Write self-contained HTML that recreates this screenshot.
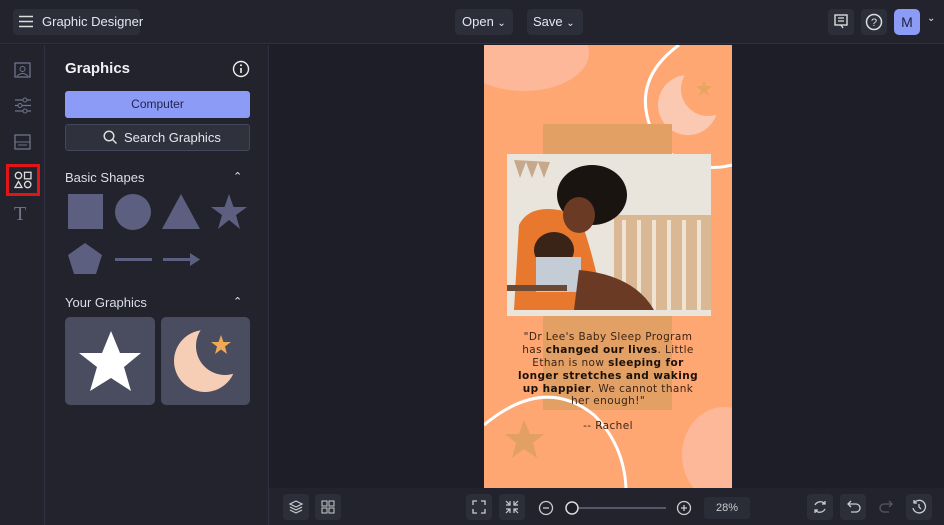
<!DOCTYPE html>
<html><head><style>
*{box-sizing:border-box;margin:0;padding:0}
body{width:944px;height:525px;overflow:hidden;background:#1d1e27;font-family:"Liberation Sans",sans-serif;color:#e6e7ee;position:relative}
.abs{position:absolute}
.btn{position:absolute;background:#2c2e3a;border-radius:4px}
.top{left:0;top:0;width:944px;height:44px;background:#22232d;border-bottom:1px solid #2f3140}
.rail{left:0;top:45px;width:45px;height:480px;background:#22232d;border-right:1px solid #2f3140}
.panel{left:45px;top:45px;width:224px;height:480px;background:#22232d;border-right:1px solid #2f3140}
.bot{left:269px;top:488px;width:675px;height:37px;background:#22232d}
.t{position:absolute;font-size:13px;white-space:nowrap}
</style></head><body>
<div class="abs top"></div>
<div class="btn" style="left:13px;top:9px;width:127px;height:26px"></div>
<svg class="abs" style="left:19px;top:15px" width="14" height="13"><path d="M0 1.5H14M0 6.5H14M0 11.5H14" stroke="#ddd" stroke-width="1.6"/></svg>
<div class="t" style="left:42px;top:14px;color:#e5e6ee">Graphic Designer</div>
<div class="btn" style="left:455px;top:9px;width:58px;height:26px"></div>
<div class="t" style="left:462px;top:14px">Open <span style="font-size:10px">⌄</span></div>
<div class="btn" style="left:527px;top:9px;width:56px;height:26px"></div>
<div class="t" style="left:533px;top:14px">Save <span style="font-size:10px">⌄</span></div>
<div class="btn" style="left:828px;top:9px;width:26px;height:26px"></div>
<svg class="abs" style="left:834px;top:14px" width="14" height="16"><rect x="1" y="1" width="12" height="10" fill="none" stroke="#ddd" stroke-width="1.4"/><path d="M4 4H10M4 7H10M7 11L9 14" stroke="#ddd" stroke-width="1.3"/></svg>
<div class="btn" style="left:861px;top:9px;width:26px;height:26px"></div>
<svg class="abs" style="left:865px;top:13px" width="18" height="18"><circle cx="9" cy="9" r="7.5" fill="none" stroke="#ddd" stroke-width="1.5"/><text x="9" y="13" font-size="11" fill="#ddd" text-anchor="middle" font-family="Liberation Sans">?</text></svg>
<div class="abs" style="left:894px;top:9px;width:26px;height:26px;background:#8c9bf5;border-radius:5px;color:#1e2040;font-size:14px;text-align:center;line-height:26px">M</div>
<div class="t" style="left:927px;top:13px;font-size:10px">⌄</div>

<div class="abs rail"></div>
<svg class="abs" style="left:14px;top:62px" width="18" height="16"><rect x="1" y="1" width="15" height="14" fill="none" stroke="#70738a" stroke-width="1.3"/><circle cx="8.5" cy="7" r="2.5" fill="none" stroke="#70738a"/><path d="M3 14Q8.5 9 14 14" fill="none" stroke="#70738a"/></svg>
<svg class="abs" style="left:14px;top:97px" width="18" height="17"><path d="M1 3H17M1 8.5H17M1 14H17" stroke="#70738a" stroke-width="1.2"/><circle cx="11" cy="3" r="2" fill="#22232d" stroke="#70738a"/><circle cx="6" cy="8.5" r="2" fill="#22232d" stroke="#70738a"/><circle cx="11" cy="14" r="2" fill="#22232d" stroke="#70738a"/></svg>
<svg class="abs" style="left:14px;top:134px" width="18" height="16"><rect x="1" y="1" width="15" height="14" fill="none" stroke="#70738a" stroke-width="1.3"/><path d="M1 8H16M4 11H13" stroke="#70738a"/></svg>
<div class="abs" style="left:6px;top:164px;width:34px;height:32px;border:3px solid #e01515"></div>
<svg class="abs" style="left:14px;top:171px" width="18" height="18"><circle cx="4.5" cy="4.5" r="3.2" fill="none" stroke="#ddd" stroke-width="1.3"/><rect x="10.5" y="1.3" width="6.5" height="6.5" fill="none" stroke="#ddd" stroke-width="1.3"/><path d="M4.5 10.5L8 16.5H1Z" fill="none" stroke="#ddd" stroke-width="1.3"/><circle cx="13.7" cy="13.5" r="3.2" fill="none" stroke="#ddd" stroke-width="1.3"/></svg>
<div class="t" style="left:14px;top:203px;font-size:20px;color:#70738a;font-family:'Liberation Serif',serif">T</div>

<div class="abs panel"></div>
<div class="t" style="left:65px;top:60px;font-size:15px;font-weight:bold;color:#f0f0f5">Graphics</div>
<svg class="abs" style="left:232px;top:60px" width="18" height="18"><circle cx="9" cy="9" r="7.5" fill="none" stroke="#eee" stroke-width="1.4"/><path d="M9 8V13" stroke="#eee" stroke-width="1.6"/><circle cx="9" cy="5.3" r="1" fill="#eee"/></svg>
<div class="abs" style="left:65px;top:91px;width:185px;height:27px;background:#8c9bf5;border-radius:3px;color:#232650;font-size:12px;text-align:center;line-height:27px">Computer</div>
<div class="abs" style="left:65px;top:124px;width:185px;height:27px;background:#2f313d;border:1px solid #44465a;border-radius:3px;font-size:13px;line-height:25px;padding-left:58px">Search Graphics</div>
<svg class="abs" style="left:103px;top:130px" width="15" height="15"><circle cx="6" cy="6" r="4.8" fill="none" stroke="#ddd" stroke-width="1.5"/><path d="M9.5 9.5L13.5 13.5" stroke="#ddd" stroke-width="1.5"/></svg>
<div class="t" style="left:65px;top:170px;color:#dcdde5">Basic Shapes</div>
<div class="t" style="left:233px;top:170px;font-size:11px">⌃</div>
<svg class="abs" style="left:65px;top:192px" width="185" height="85">
<rect x="3" y="2" width="35" height="35" fill="#5d5f80"/>
<circle cx="68" cy="20" r="18" fill="#5d5f80"/>
<path d="M116 2L135 37H97Z" fill="#5d5f80"/>
<path d="M164 2L168.5 15H182L171 23L175 37L164 28L153 37L157 23L146 15H159.5Z" fill="#5d5f80"/>
<path d="M20 51L37 63L31 82H9L3 63Z" fill="#5d5f80"/>
<rect x="50" y="66" width="37" height="3" fill="#5d5f80"/>
<path d="M98 66H125V61L135 67.5L125 74V69H98Z" fill="#5d5f80"/>
</svg>
<div class="t" style="left:65px;top:295px;color:#dcdde5">Your Graphics</div>
<div class="t" style="left:233px;top:295px;font-size:11px">⌃</div>
<div class="abs" style="left:65px;top:317px;width:90px;height:88px;background:#4a4c5f;border-radius:5px"></div>
<svg class="abs" style="left:78px;top:330px" width="64" height="63"><path d="M33 1L42 23L63 23L46 37L53 61L33 48L12 61L19 37L1 23L24 23Z" fill="#fff"/></svg>
<div class="abs" style="left:161px;top:317px;width:89px;height:88px;background:#4a4c5f;border-radius:5px"></div>
<svg class="abs" style="left:161px;top:317px" width="89" height="88">
<defs><mask id="m1"><rect width="89" height="88" fill="#fff"/><circle cx="64" cy="29" r="29" fill="#000"/></mask></defs>
<circle cx="44" cy="44" r="31" fill="#f6cdb5" mask="url(#m1)"/>
<path d="M60 18L62.5 25H70L64 29.5L66 37L60 32.5L54 37L56 29.5L50 25H57.5Z" fill="#f0aa55"/></svg>

<!-- artboard -->
<svg class="abs" style="left:484px;top:45px" width="248" height="443">
<defs><clipPath id="c"><rect width="248" height="443"/></clipPath>
<mask id="m2"><rect width="248" height="443" fill="#fff"/><circle cx="224" cy="44" r="27" fill="#000"/></mask></defs>
<g clip-path="url(#c)">
<rect width="248" height="443" fill="#fea772"/>
<ellipse cx="40" cy="8" rx="65" ry="38" fill="#fdb89a"/>
<path d="M195 0Q140 40 175 100Q210 130 248 120" fill="none" stroke="#fff" stroke-width="3"/>
<circle cx="204" cy="60" r="30" fill="#fbc8b2" mask="url(#m2)"/>
<path d="M220 35l2 6h6l-5 4 2 6-5-4-5 4 2-6-5-4h6z" fill="#e8a560"/>
<rect x="59" y="79" width="129" height="286" fill="#e2a064"/>
<ellipse cx="240" cy="410" rx="42" ry="48" fill="#fdb89a"/>
<path d="M0 380Q60 330 110 370Q140 400 142 443" fill="none" stroke="#fff" stroke-width="3"/>
<path d="M40 375l6 14h14l-11 9 4 15-13-9-12 9 4-15-11-9h14z" fill="#e2a064"/>
<rect x="23" y="109" width="204" height="162" fill="#e9e4dc"/>
<path d="M30 115l6 18 6-16 6 16 6-16 6 16 6-16" fill="#c8a88a"/>
<rect x="130" y="170" width="97" height="95" fill="#d9b893"/>
<path d="M140 175V265M155 175V265M170 175V265M185 175V265M200 175V265M215 175V265" stroke="#efe3d3" stroke-width="4"/>
<ellipse cx="108" cy="150" rx="35" ry="30" fill="#1a1410"/>
<path d="M35 180Q45 160 75 165L95 170Q110 210 120 265H30Z" fill="#e7782e"/>
<ellipse cx="95" cy="170" rx="16" ry="18" fill="#6a3a24"/>
<ellipse cx="70" cy="205" rx="20" ry="18" fill="#3a2418"/>
<rect x="52" y="212" width="45" height="35" fill="#c4ccd6"/>
<path d="M95 225Q150 230 170 265H90Z" fill="#6a3a24"/>
<rect x="23" y="240" width="60" height="6" fill="#6b4a35"/>
</g>
<g font-family="'DejaVu Sans',sans-serif" font-size="10.5" fill="#3a2418" text-anchor="middle" letter-spacing="0.4">
<text x="124" y="295">"Dr Lee's Baby Sleep Program</text>
<text x="124" y="308">has <tspan font-weight="bold" fill="#1a100a">changed our lives</tspan>. Little</text>
<text x="124" y="321">Ethan is now <tspan font-weight="bold" fill="#1a100a">sleeping for</tspan></text>
<text x="124" y="334" font-weight="bold" fill="#1a100a">longer stretches and waking</text>
<text x="124" y="347"><tspan font-weight="bold" fill="#1a100a">up happier</tspan>. We cannot thank</text>
<text x="124" y="359">her enough!"</text>
<text x="124" y="384">-- Rachel</text>
</g>
</svg>

<div class="abs bot"></div>
<div class="btn" style="left:283px;top:494px;width:26px;height:26px"></div>
<svg class="abs" style="left:288px;top:499px" width="16" height="16"><path d="M8 2L14 5L8 8L2 5Z M2 8L8 11L14 8 M2 11L8 14L14 11" fill="none" stroke="#ccc" stroke-width="1.2"/></svg>
<div class="btn" style="left:315px;top:494px;width:26px;height:26px"></div>
<svg class="abs" style="left:321px;top:500px" width="14" height="14"><rect x="1" y="1" width="5" height="5" fill="none" stroke="#ccc"/><rect x="8" y="1" width="5" height="5" fill="none" stroke="#ccc"/><rect x="1" y="8" width="5" height="5" fill="none" stroke="#ccc"/><rect x="8" y="8" width="5" height="5" fill="none" stroke="#ccc"/></svg>
<div class="btn" style="left:466px;top:494px;width:26px;height:26px"></div>
<svg class="abs" style="left:472px;top:500px" width="14" height="14"><path d="M1 5V1H5M9 1H13V5M13 9V13H9M5 13H1V9" fill="none" stroke="#ccc" stroke-width="1.3"/></svg>
<div class="btn" style="left:499px;top:494px;width:26px;height:26px"></div>
<svg class="abs" style="left:505px;top:500px" width="14" height="14"><path d="M1 5H5V1M9 1V5H13M13 9H9V13M5 13V9H1M5 5L1 1M9 5L13 1M9 9L13 13M5 9L1 13" fill="none" stroke="#ccc" stroke-width="1.2"/></svg>
<svg class="abs" style="left:538px;top:500px" width="160" height="16"><circle cx="8" cy="8" r="6.5" fill="none" stroke="#ccc" stroke-width="1.3"/><path d="M5 8H11" stroke="#ccc" stroke-width="1.3"/><path d="M28 8H128" stroke="#555869" stroke-width="2"/><circle cx="34" cy="8" r="6" fill="#1d1e27" stroke="#ddd" stroke-width="1.5"/><circle cx="146" cy="8" r="6.5" fill="none" stroke="#ccc" stroke-width="1.3"/><path d="M143 8H149M146 5V11" stroke="#ccc" stroke-width="1.3"/></svg>
<div class="abs" style="left:704px;top:497px;width:46px;height:22px;background:#2a2c38;border-radius:3px;font-size:11px;color:#ccc;text-align:center;line-height:22px">28%</div>
<div class="btn" style="left:807px;top:494px;width:26px;height:26px"></div>
<svg class="abs" style="left:812px;top:499px" width="16" height="16"><path d="M3 6A6 6 0 0 1 13 5M13 10A6 6 0 0 1 3 11M13 2V5H10M3 14V11H6" fill="none" stroke="#ccc" stroke-width="1.3"/></svg>
<div class="btn" style="left:840px;top:494px;width:26px;height:26px"></div>
<svg class="abs" style="left:846px;top:499px" width="16" height="16"><path d="M5 2L2 5L5 8M2 5H10A4 4 0 0 1 10 13H5" fill="none" stroke="#ccc" stroke-width="1.3"/></svg>
<svg class="abs" style="left:878px;top:499px" width="16" height="16"><path d="M11 2L14 5L11 8M14 5H6A4 4 0 0 0 6 13H11" fill="none" stroke="#555869" stroke-width="1.3"/></svg>
<div class="btn" style="left:906px;top:494px;width:26px;height:26px"></div>
<svg class="abs" style="left:911px;top:499px" width="16" height="16"><path d="M3 4A6.3 6.3 0 1 1 2 9M3 1V4H6M8 5V8L10 10" fill="none" stroke="#ccc" stroke-width="1.3"/></svg>
</body></html>
